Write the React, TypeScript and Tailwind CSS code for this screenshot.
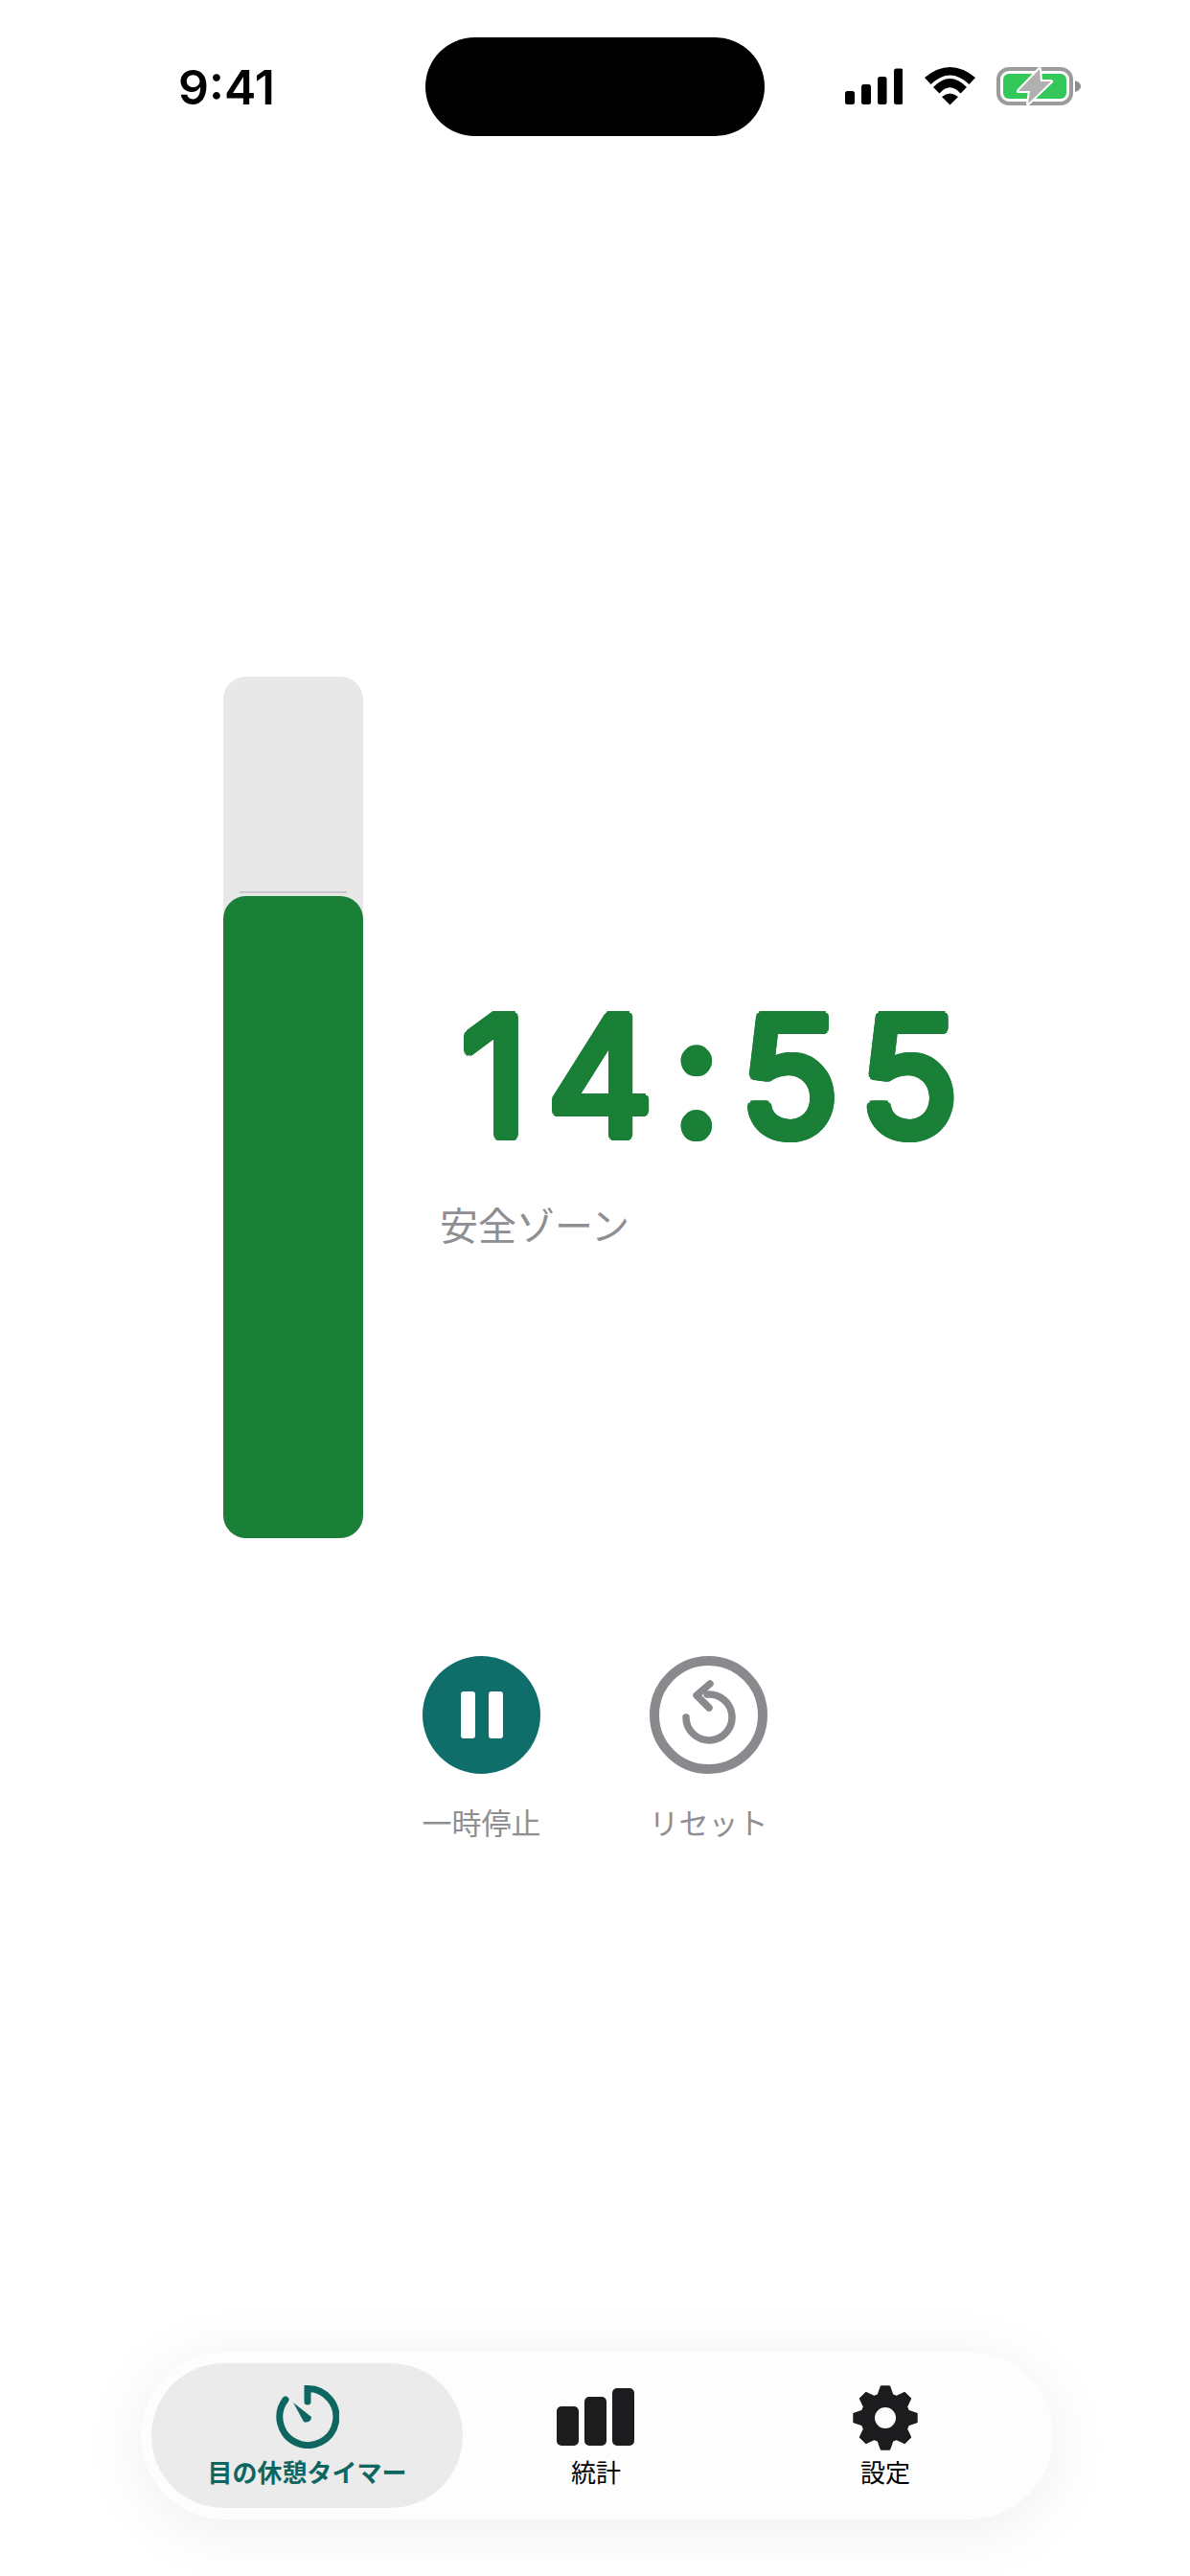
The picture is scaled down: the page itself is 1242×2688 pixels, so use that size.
const CJK = '"Inter","Noto Sans CJK JP",sans-serif';

function gearPath() {
  const cx = 34, cy = 34, n = 8;
  const pts: string[] = [];
  for (let i = 0; i < n; i++) {
    const a = (i * 2 * Math.PI) / n - Math.PI / 2;
    const p = (r: number, d: number) => {
      const t = a + d;
      return `${(cx + r * Math.cos(t)).toFixed(2)} ${(cy + r * Math.sin(t)).toFixed(2)}`;
    };
    pts.push(`${i === 0 ? "M" : "L"}${p(25, -0.3)}`, `L${p(33, -0.13)}`, `L${p(33, 0.13)}`, `L${p(25, 0.3)}`);
  }
  return `${pts.join(" ")} Z M${cx - 12} ${cy} a12 12 0 1 0 24 0 a12 12 0 1 0 -24 0 Z`;
}

function StatusBar() {
  return (
    <div className="flex h-[142px] shrink-0 items-center pt-[39px]">
      <div className="ml-[186px] w-[258px] text-[50px] font-semibold leading-none text-black" style={{ fontFamily: '"Inter",sans-serif' }}>
        9:41
      </div>
      <div className="h-[103px] w-[354px] rounded-full bg-black mt-[-39px] relative top-[19px]" />
      <div className="ml-[84px] flex items-center mt-[-2px]">
        <svg width="60" height="40" viewBox="0 0 60 40" fill="#000">
          <rect x="0" y="25" width="10" height="14" rx="2.5" />
          <rect x="17" y="18" width="10" height="21" rx="2.5" />
          <rect x="34" y="10" width="9.5" height="29" rx="2.5" />
          <rect x="51" y="1.5" width="9.5" height="37.5" rx="2.5" />
        </svg>
        <svg className="ml-[23px]" width="53" height="40" viewBox="0 0 53 40" fill="#000">
          <path d="M0 11 Q26.5 -11 53 11 L46.5 18 Q26.5 -1 6.5 18 Z" />
          <path d="M9 21 Q26.5 3 44 21 L37.5 27.5 Q26.5 15 15.5 27.5 Z" />
          <path d="M18 31 Q26.5 24 35 31 L26.5 39.5 Z" />
        </svg>
        <svg className="ml-[22px]" width="90" height="40" viewBox="0 0 90 40">
          <rect x="2" y="2" width="76" height="36" rx="11" fill="none" stroke="#9b9b9b" strokeWidth="4" />
          <rect x="7" y="7" width="66" height="26" rx="6" fill="#34c759" />
          <path d="M82 14 Q88 16 88 20 Q88 24 82 26 Z" fill="#8e8e8e" />
          <path d="M45 2 L23 25 L35 25 L33 38 L57 15 L46 15 Z" fill="#b0b0b0" stroke="#fff" strokeWidth="4" strokeLinejoin="round" paintOrder="stroke" />
        </svg>
      </div>
    </div>
  );
}

function Controls() {
  return (
    <div className="mt-[123px] flex justify-center gap-[114px]">
      <div className="flex w-[123px] flex-col items-center">
        <div className="flex h-[123px] w-[123px] items-center justify-center gap-[14px] rounded-full bg-[#0f6e6a]">
          <div className="h-[49px] w-[15px] rounded-[3px] bg-white" />
          <div className="h-[49px] w-[15px] rounded-[3px] bg-white" />
        </div>
        <div className="mt-[32px] whitespace-nowrap text-[31px] leading-[40px] text-[#8e8e93]" style={{ fontFamily: CJK }}>一時停止</div>
      </div>
      <div className="flex w-[123px] flex-col items-center">
        <div className="h-[123px] w-[123px]">
          <svg width="123" height="123" viewBox="0 0 123 123" fill="none" stroke="#8a8a8e">
            <circle cx="61.5" cy="61.5" r="56.5" strokeWidth="10" />
            <path d="M38 64 A24 24 0 1 0 60 40" strokeWidth="7.5" strokeLinecap="round" />
            <path d="M63 29 L49 41 L62 54" strokeWidth="7.5" strokeLinecap="round" strokeLinejoin="round" />
          </svg>
        </div>
        <div className="mt-[32px] whitespace-nowrap text-[31px] leading-[40px] text-[#8e8e93]" style={{ fontFamily: CJK }}>リセット</div>
      </div>
    </div>
  );
}

function TabBar() {
  return (
    <div className="mb-[59px] ml-[147px] mt-auto flex h-[175px] w-[952px] items-center rounded-full bg-[#fdfdfd] pl-[11px] shadow-[0_10px_70px_rgba(0,0,0,0.07)]" style={{ fontFamily: CJK }}>
      <div className="flex h-[151px] w-[325px] flex-col items-center rounded-full bg-[#ebebeb] pt-[23px]">
        <svg width="66" height="66" viewBox="0 0 66 66" fill="none" stroke="#0e6660">
          <path d="M33 17 V3.5 A29.5 29.5 0 1 1 10 15" strokeWidth="7" strokeLinecap="round" />
          <path d="M18 18 L29 38 A5.5 5.5 0 0 0 37 33 Z" fill="#0e6660" stroke="none" />
        </svg>
        <div className="mt-[8px] whitespace-nowrap text-[26px] font-semibold leading-[36px] text-[#0e6660]">目の休憩タイマー</div>
      </div>
      <div className="flex h-[151px] w-[278px] flex-col items-center pt-[23px]">
        <svg className="h-[66px]" width="82" height="66" viewBox="0 0 82 66" fill="#1c1c1e">
          <rect x="0" y="22" width="23" height="41" rx="5" />
          <rect x="29" y="12" width="23" height="51" rx="5" />
          <rect x="58" y="3" width="23" height="60" rx="5" />
        </svg>
        <div className="mt-[8px] whitespace-nowrap text-[26px] font-normal leading-[36px] text-black">統計</div>
      </div>
      <div className="flex h-[151px] w-[326px] flex-col items-center pt-[23px]">
        <svg width="68" height="68" viewBox="0 0 68 68" fill="#1c1c1e" fillRule="evenodd" className="-mb-[2px]">
          <path d={gearPath()} strokeLinejoin="round" stroke="#1c1c1e" strokeWidth="2" />
        </svg>
        <div className="mt-[8px] whitespace-nowrap text-[26px] font-normal leading-[36px] text-black">設定</div>
      </div>
    </div>
  );
}

export default function App() {
  return (
    <div className="flex h-[2688px] w-[1242px] flex-col overflow-hidden bg-white">
      <StatusBar />
      <div className="mt-[564px] flex pl-[233px]">
        <div className="relative h-[899px] w-[146px] rounded-[24px] bg-[#e8e8e8]">
          <div className="absolute left-[17px] right-[17px] top-[224px] h-[2px] bg-[#c8c8c8]" />
          <div className="absolute inset-x-0 bottom-0 h-[670px] rounded-[24px] bg-[#1a7f37]" />
        </div>
        <div className="ml-[80px] flex flex-col pt-[298px]">
          <div
            className="ml-[22px] whitespace-nowrap text-[172px] font-normal leading-[236px] tracking-[20px] text-[#1a7f37] [text-shadow:5px_0_#1a7f37,4.6px_1.9px_#1a7f37,3.5px_3.5px_#1a7f37,1.9px_4.6px_#1a7f37,0_5px_#1a7f37,-1.9px_4.6px_#1a7f37,-3.5px_3.5px_#1a7f37,-4.6px_1.9px_#1a7f37,-5px_0_#1a7f37,-4.6px_-1.9px_#1a7f37,-3.5px_-3.5px_#1a7f37,-1.9px_-4.6px_#1a7f37,0_-5px_#1a7f37,1.9px_-4.6px_#1a7f37,3.5px_-3.5px_#1a7f37,4.6px_-1.9px_#1a7f37]"
            style={{ fontFamily: '"Inter",sans-serif' }}
          >
            14:55
          </div>
          <div className="mt-[16px] text-[40px] leading-[48px] text-[#8e8e93]" style={{ fontFamily: CJK }}>安全ゾーン</div>
        </div>
      </div>
      <Controls />
      <TabBar />
    </div>
  );
}
